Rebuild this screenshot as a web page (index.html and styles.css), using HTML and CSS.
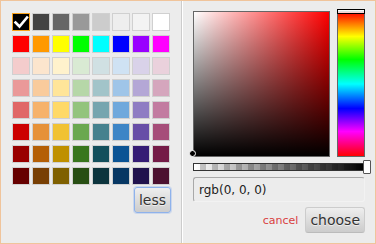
FILE: index.html
```html
<!DOCTYPE html>
<html lang="en">
<head>
  <meta charset="UTF-8">
  <title>Color picker</title>
  <link rel="stylesheet" href="styles.css">
</head>
<body>
  <div class="sp-container">
    <!-- Paleta -->
    <div class="sp-palette">
      <div class="sp-row">
        <span class="sp-thumb sp-active" style="background:#000">
          <svg width="16" height="16" viewBox="0 0 16 16"><path d="M2.5 8.5 L6.5 12.5 L14 3.5" fill="none" stroke="#fff" stroke-width="2.6" stroke-linecap="square"/></svg>
        </span>
        <span class="sp-thumb" style="background:#444"></span>
        <span class="sp-thumb" style="background:#666"></span>
        <span class="sp-thumb" style="background:#999"></span>
        <span class="sp-thumb" style="background:#ccc"></span>
        <span class="sp-thumb" style="background:#eee"></span>
        <span class="sp-thumb" style="background:#f3f3f3"></span>
        <span class="sp-thumb" style="background:#fff"></span>
      </div>
      <div class="sp-row">
        <span class="sp-thumb" style="background:#f00"></span>
        <span class="sp-thumb" style="background:#f90"></span>
        <span class="sp-thumb" style="background:#ff0"></span>
        <span class="sp-thumb" style="background:#0f0"></span>
        <span class="sp-thumb" style="background:#0ff"></span>
        <span class="sp-thumb" style="background:#00f"></span>
        <span class="sp-thumb" style="background:#90f"></span>
        <span class="sp-thumb" style="background:#f0f"></span>
      </div>
      <div class="sp-row">
        <span class="sp-thumb" style="background:#f4cccc"></span>
        <span class="sp-thumb" style="background:#fce5cd"></span>
        <span class="sp-thumb" style="background:#fff2cc"></span>
        <span class="sp-thumb" style="background:#d9ead3"></span>
        <span class="sp-thumb" style="background:#d0e0e3"></span>
        <span class="sp-thumb" style="background:#cfe2f3"></span>
        <span class="sp-thumb" style="background:#d9d2e9"></span>
        <span class="sp-thumb" style="background:#ead1dc"></span>
      </div>
      <div class="sp-row">
        <span class="sp-thumb" style="background:#ea9999"></span>
        <span class="sp-thumb" style="background:#f9cb9c"></span>
        <span class="sp-thumb" style="background:#ffe599"></span>
        <span class="sp-thumb" style="background:#b6d7a8"></span>
        <span class="sp-thumb" style="background:#a2c4c9"></span>
        <span class="sp-thumb" style="background:#9fc5e8"></span>
        <span class="sp-thumb" style="background:#b4a7d6"></span>
        <span class="sp-thumb" style="background:#d5a6bd"></span>
      </div>
      <div class="sp-row">
        <span class="sp-thumb" style="background:#e06666"></span>
        <span class="sp-thumb" style="background:#f6b26b"></span>
        <span class="sp-thumb" style="background:#ffd966"></span>
        <span class="sp-thumb" style="background:#93c47d"></span>
        <span class="sp-thumb" style="background:#76a5af"></span>
        <span class="sp-thumb" style="background:#6fa8dc"></span>
        <span class="sp-thumb" style="background:#8e7cc3"></span>
        <span class="sp-thumb" style="background:#c27ba0"></span>
      </div>
      <div class="sp-row">
        <span class="sp-thumb" style="background:#c00"></span>
        <span class="sp-thumb" style="background:#e69138"></span>
        <span class="sp-thumb" style="background:#f1c232"></span>
        <span class="sp-thumb" style="background:#6aa84f"></span>
        <span class="sp-thumb" style="background:#45818e"></span>
        <span class="sp-thumb" style="background:#3d85c6"></span>
        <span class="sp-thumb" style="background:#674ea7"></span>
        <span class="sp-thumb" style="background:#a64d79"></span>
      </div>
      <div class="sp-row">
        <span class="sp-thumb" style="background:#900"></span>
        <span class="sp-thumb" style="background:#b45f06"></span>
        <span class="sp-thumb" style="background:#bf9000"></span>
        <span class="sp-thumb" style="background:#38761d"></span>
        <span class="sp-thumb" style="background:#134f5c"></span>
        <span class="sp-thumb" style="background:#0b5394"></span>
        <span class="sp-thumb" style="background:#351c75"></span>
        <span class="sp-thumb" style="background:#741b47"></span>
      </div>
      <div class="sp-row">
        <span class="sp-thumb" style="background:#600"></span>
        <span class="sp-thumb" style="background:#783f04"></span>
        <span class="sp-thumb" style="background:#7f6000"></span>
        <span class="sp-thumb" style="background:#274e13"></span>
        <span class="sp-thumb" style="background:#0c343d"></span>
        <span class="sp-thumb" style="background:#073763"></span>
        <span class="sp-thumb" style="background:#20124d"></span>
        <span class="sp-thumb" style="background:#4c1130"></span>
      </div>
      <div class="sp-toggle-row">
        <button class="sp-button sp-toggle">less</button>
      </div>
    </div>

    <!-- Seletor -->
    <div class="sp-picker">
      <div class="sp-top">
        <div class="sp-color">
          <div class="sp-sat">
            <div class="sp-val"></div>
          </div>
          <div class="sp-dragger"></div>
        </div>
        <div class="sp-hue">
          <div class="sp-slider"></div>
        </div>
      </div>
      <div class="sp-alpha">
        <div class="sp-alpha-inner"></div>
        <div class="sp-alpha-handle"></div>
      </div>
      <div class="sp-input">rgb(0, 0, 0)</div>
      <div class="sp-buttons">
        <a class="sp-cancel">cancel</a>
        <button class="sp-button sp-choose">choose</button>
      </div>
    </div>
  </div>
</body>
</html>
```

FILE: styles.css
```css
/* Base */
body {
  margin: 0;
  padding: 0;
  font-family: 'DejaVu Sans', Verdana, sans-serif;
}

.sp-container {
  display: flex;
  width: 376px;
  height: 244px;
  box-sizing: border-box;
  border: 1px solid #f0c49b;
  background: #ececec;
}

/* Paleta */
.sp-palette {
  width: 160px;
  padding: 10px;
  border-right: 1px solid #ccc;
}

.sp-row {
  display: flex;
}

.sp-thumb {
  width: 16px;
  height: 16px;
  margin: 2px 1px;
  border: 1px solid #d0d0d0;
  display: flex;
  align-items: center;
  justify-content: center;
}

.sp-thumb.sp-active {
  border-color: #f7a21b;
}

.sp-toggle-row {
  display: flex;
  justify-content: flex-end;
}

/* Botões */
.sp-button {
  font-family: 'DejaVu Sans', Verdana, sans-serif;
  font-size: 14px;
  line-height: 1;
  color: #333;
  padding: 5px 4px;
  height: 26px;
  box-sizing: border-box;
  background: linear-gradient(to bottom, #eeeeee, #cccccc);
  border: 1px solid #ccc;
  border-bottom-color: #bbb;
  border-radius: 3px;
  text-shadow: 0 1px 0 #eee;
}

.sp-toggle {
  border-color: #8eb2ec;
  box-shadow: 0 0 0 1px rgba(142, 178, 236, 0.35);
}

/* Seletor */
.sp-picker {
  width: 172px;
  padding: 10px;
  border-left: 1px solid #fff;
}

.sp-top {
  display: flex;
  justify-content: space-between;
}

.sp-color {
  position: relative;
  width: 137px;
  height: 146px;
  box-sizing: border-box;
  border: 1px solid #666;
  background: #f00;
}

.sp-sat {
  width: 100%;
  height: 100%;
  background: linear-gradient(to right, #fff, rgba(255, 255, 255, 0));
}

.sp-val {
  width: 100%;
  height: 100%;
  background: linear-gradient(to top, #000, rgba(0, 0, 0, 0));
}

.sp-dragger {
  position: absolute;
  left: -5px;
  bottom: -1px;
  width: 5px;
  height: 5px;
  border: 1px solid #fff;
  border-radius: 5px;
  background: #000;
}

.sp-hue {
  position: relative;
  width: 28px;
  height: 146px;
  box-sizing: border-box;
  border: 1px solid #666;
  background: linear-gradient(to bottom, #f00 0%, #ff0 17%, #0f0 33%, #0ff 50%, #00f 67%, #f0f 83%, #f00 100%);
}

.sp-slider {
  position: absolute;
  top: -3px;
  left: -1px;
  right: -1px;
  height: 3px;
  border: 1px solid #000;
  background: rgba(255, 255, 255, 0.8);
}

.sp-alpha {
  position: relative;
  margin-top: 6px;
  height: 8px;
  box-sizing: border-box;
  border: 1px solid #333;
  background: repeating-linear-gradient(to right, #fff 0, #fff 6px, #ccc 6px, #ccc 12px);
}

.sp-alpha-inner {
  height: 100%;
  background: linear-gradient(to right, rgba(0, 0, 0, 0), #000);
}

.sp-alpha-handle {
  position: absolute;
  top: -4px;
  bottom: -4px;
  left: 169px;
  width: 6px;
  border: 1px solid #555;
  border-radius: 1px;
  background: #fff;
}

.sp-input {
  margin-top: 6px;
  height: 25px;
  box-sizing: border-box;
  padding: 0 5px;
  display: flex;
  align-items: center;
  font-size: 12px;
  color: #222;
  border: 1px solid;
  border-color: #a9a9a9 #f2f2f2 #f2f2f2 #a9a9a9;
  border-radius: 3px;
}

.sp-buttons {
  margin-top: 5px;
  display: flex;
  justify-content: flex-end;
  align-items: center;
}

.sp-cancel {
  font-size: 11px;
  color: #d93f3f;
  padding: 2px;
  margin-right: 5px;
}
```
